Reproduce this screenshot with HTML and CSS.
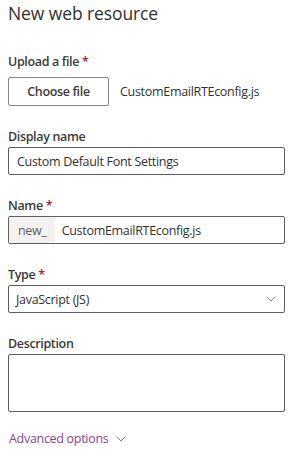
FILE: index.html
```html
<!DOCTYPE html>
<html>
<head>
<meta charset="utf-8">
<link rel="stylesheet" href="styles.css">
</head>
<body>
<div class="panel">
  <h1 class="title">New web resource</h1>
  <div class="field upload">
    <div class="label">Upload a file <span class="req">*</span></div>
    <div class="upload-row">
      <div class="btn">Choose file</div>
      <span class="filename">CustomEmailRTEconfig.js</span>
    </div>
  </div>
  <div class="field">
    <div class="label">Display name</div>
    <div class="input">Custom Default Font Settings</div>
  </div>
  <div class="field">
    <div class="label">Name <span class="req">*</span></div>
    <div class="input prefixed"><span class="prefix">new_</span><span class="val">CustomEmailRTEconfig.js</span></div>
  </div>
  <div class="field">
    <div class="label">Type <span class="req">*</span></div>
    <div class="input select"><span>JavaScript (JS)</span>
      <svg class="chev" width="10" height="6" viewBox="0 0 10 6"><path d="M0.5 0.5 L5 5 L9.5 0.5" fill="none" stroke="#8a8886" stroke-width="1"/></svg>
    </div>
  </div>
  <div class="field">
    <div class="label">Description</div>
    <div class="input textarea"></div>
  </div>
  <div class="advanced">Advanced options
    <svg class="chev2" width="10" height="6" viewBox="0 0 10 6"><path d="M0.5 0.5 L5 5 L9.5 0.5" fill="none" stroke="#8a8886" stroke-width="1"/></svg>
  </div>
</div>
</body>
</html>
```
FILE: styles.css
```css
html, body {
  margin: 0;
  padding: 0;
  background: #ffffff;
}
body {
  font-family: "Open Sans", "Segoe UI", sans-serif;
  font-size: 12.5px;
  letter-spacing: -0.3px;
  color: #323130;
}
.panel {
  width: 277px;
  padding: 0 19px 0 8px;
}
.title {
  margin: 0;
  padding-top: 1px;
  font-size: 17.5px;
  line-height: 24px;
  font-weight: 400;
  letter-spacing: -0.1px;
  color: #323130;
}
.field {
  margin-top: 21px;
}
.upload {
  margin-top: 27px;
}
.label {
  line-height: 20px;
  font-weight: 600;
  letter-spacing: -0.35px;
  color: #3b3a39;
}
.req {
  color: #a4262c;
}
.upload-row {
  display: flex;
  align-items: center;
  margin-top: 5px;
}
.btn {
  box-sizing: border-box;
  width: 101px;
  height: 29px;
  border: 1px solid #8a8886;
  border-radius: 2px;
  display: flex;
  align-items: center;
  justify-content: center;
  font-weight: 600;
  letter-spacing: -0.35px;
  color: #3b3a39;
}
.filename {
  margin-left: 11px;
}
.input {
  box-sizing: border-box;
  height: 28px;
  border: 1px solid #605e5c;
  border-radius: 2px;
  padding: 0 8px;
  display: flex;
  align-items: center;
}
.prefixed {
  padding: 0;
}
.prefix {
  align-self: stretch;
  display: flex;
  align-items: center;
  background: #f3f2f1;
  color: #605e5c;
  padding: 0 8px 0 9px;
}
.val {
  padding-left: 7px;
}
.select {
  justify-content: space-between;
  padding-left: 7px;
}
.textarea {
  height: 58px;
}
.advanced {
  margin-top: 17px;
  padding-left: 1px;
  color: #8f4399;
  display: flex;
  align-items: center;
  line-height: 20px;
}
.chev2 {
  margin-left: 8px;
}
```
